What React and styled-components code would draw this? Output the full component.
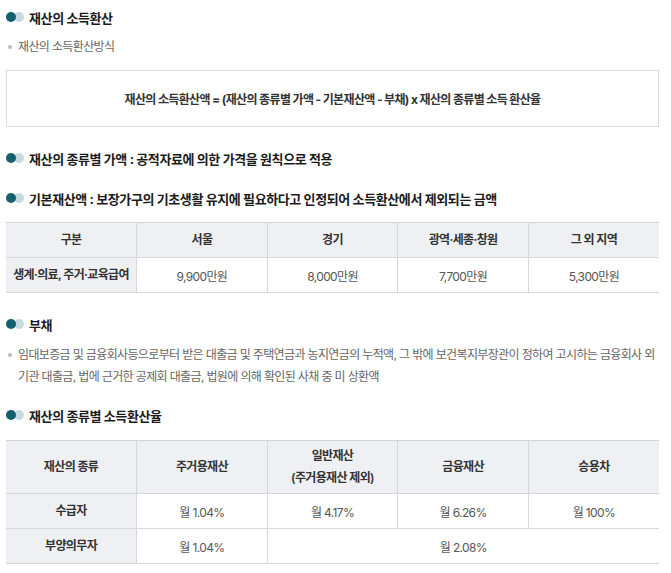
import styled, { createGlobalStyle } from 'styled-components';

const GlobalStyle = createGlobalStyle`
    body {
        margin: 0;
        background: #fff;
        font-family: Inter, "Noto Sans CJK KR", sans-serif;
        color: #222;
        letter-spacing: -0.04em;
    }
`

function Dots() {
    return (
        <svg width="18" height="10" viewBox="0 0 18 10">
            <circle cx="13" cy="5" r="5" fill="#c6dae0" />
            <circle cx="5" cy="5" r="5" fill="#14606f" />
        </svg>
    )
}

export default function App() {
    return (
        <Page>
            <GlobalStyle />
            <Heading top={0}><Dots />재산의 소득환산</Heading>
            <Bullet top={10} line={20}>재산의 소득환산방식</Bullet>
            <Formula>재산의 소득환산액 = (재산의 종류별 가액 - 기본재산액 - 부채) x 재산의 종류별 소득 환산율</Formula>

            <Heading top={21}><Dots />재산의 종류별 가액 : 공적자료에 의한 가격을 원칙으로 적용</Heading>
            <Heading top={20}><Dots />기본재산액 : 보장가구의 기초생활 유지에 필요하다고 인정되어 소득환산에서 제외되는 금액</Heading>

            <Table top={14}>
                <thead>
                    <tr>
                        <Th>구분</Th>
                        <Th>서울</Th>
                        <Th>경기</Th>
                        <Th>광역·세종·창원</Th>
                        <Th>그 외 지역</Th>
                    </tr>
                </thead>
                <tbody>
                    <tr>
                        <Th>생계·의료, 주거·교육급여</Th>
                        <Td>9,900만원</Td>
                        <Td>8,000만원</Td>
                        <Td>7,700만원</Td>
                        <Td>5,300만원</Td>
                    </tr>
                </tbody>
            </Table>

            <Heading top={21}><Dots />부채</Heading>
            <Bullet top={10} line={22}>
                임대보증금 및 금융회사등으로부터 받은 대출금 및 주택연금과 농지연금의 누적액, 그 밖에 보건복지부장관이 정하여 고시하는 금융회사 외 기관 대출금, 법에 근거한 공제회 대출금, 법원에 의해 확인된 사채 중 미 상환액
            </Bullet>

            <Heading top={17}><Dots />재산의 종류별 소득환산율</Heading>
            <Table top={15}>
                <thead>
                    <tr>
                        <Th tall>재산의 종류</Th>
                        <Th tall>주거용재산</Th>
                        <Th tall>일반재산<br />(주거용재산 제외)</Th>
                        <Th tall>금융재산</Th>
                        <Th tall>승용차</Th>
                    </tr>
                </thead>
                <tbody>
                    <tr>
                        <Th>수급자</Th>
                        <Td>월 1.04%</Td>
                        <Td>월 4.17%</Td>
                        <Td>월 6.26%</Td>
                        <Td>월 100%</Td>
                    </tr>
                    <tr>
                        <Th>부양의무자</Th>
                        <Td>월 1.04%</Td>
                        <Td colSpan={3}>월 2.08%</Td>
                    </tr>
                </tbody>
            </Table>
        </Page>
    )
}

const Page = styled.div`
    width: 653px;
    padding: 7px 12px 0 6px;
`

const Heading = styled.h3`
    margin: ${p => p.top}px 0 0;
    display: flex;
    align-items: center;
    gap: 5px;
    height: 20px;
    font-size: 13px;
    font-weight: 700;
    color: #1b1b1b;
    letter-spacing: -0.03em;
    svg {
        flex: none;
    }
`

const Bullet = styled.p`
    position: relative;
    margin: ${p => p.top}px 0 0;
    padding-left: 12px;
    font-size: 12px;
    line-height: ${p => p.line}px;
    color: #666;
    &::before {
        content: '';
        position: absolute;
        left: 2px;
        top: ${p => p.line / 2 - 2}px;
        width: 4px;
        height: 4px;
        border-radius: 50%;
        background: #bbb;
    }
`

const Formula = styled.div`
    margin-top: 13px;
    height: 55px;
    border: 1px solid #dcdcdc;
    display: flex;
    align-items: center;
    justify-content: center;
    font-size: 12px;
    font-weight: 700;
    color: #333;
`

const Table = styled.table`
    margin-top: ${p => p.top}px;
    width: 100%;
    table-layout: fixed;
    border-collapse: collapse;
    border-top: 1px solid #d2d2d2;
    border-bottom: 1px solid #d2d2d2;
    font-size: 12px;
    text-align: center;
`

const Th = styled.th`
    height: ${p => (p.tall ? 52 : 34)}px;
    padding: 0 4px;
    background: #eff0f3;
    border-bottom: 1px solid #d7d7d7;
    border-right: 1px solid #d7d7d7;
    font-weight: 600;
    color: #333;
    line-height: 22px;
    &:last-child {
        border-right: none;
    }
`

const Td = styled.td`
    height: 34px;
    padding: 0 4px;
    border-bottom: 1px solid #d7d7d7;
    border-right: 1px solid #d7d7d7;
    color: #555;
    &:last-child {
        border-right: none;
    }
`
